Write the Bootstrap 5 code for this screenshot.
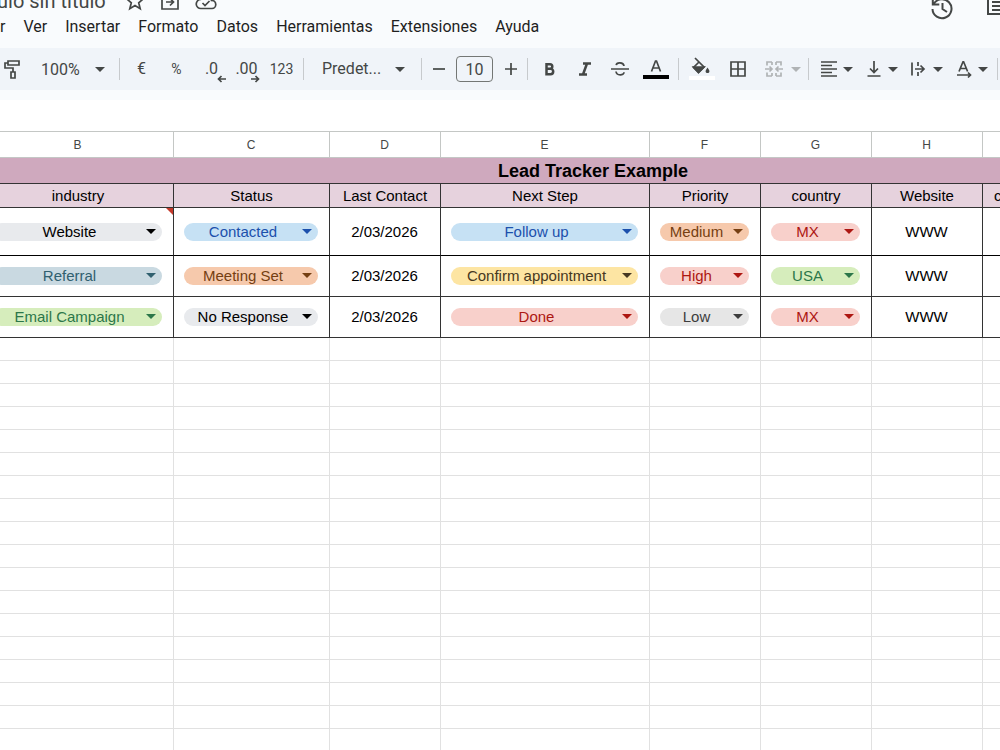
<!DOCTYPE html>
<html lang="es">
<head>
<meta charset="utf-8">
<meta name="viewport" content="width=device-width, initial-scale=1">
<title>Lead Tracker Example</title>
<link href="https://cdn.jsdelivr.net/npm/bootstrap@5.3.0/dist/css/bootstrap.min.css" rel="stylesheet">
<style>
body { font-family: Roboto, sans-serif; color: #1f1f1f; }
button, select { border: 0; background: none; padding: 0; color: inherit; white-space: nowrap; }
svg { display: block; fill: none; stroke: currentColor; stroke-width: 2; overflow: visible; }
svg.thin { stroke-width: 1.7; }
svg.bold { stroke-width: 2.5; }
.app-head { background: #f9fbfd; padding-bottom: 10px; }
.ink { color: #444746; }
/* title bar scrolled partly out of view */
.doc-bar { height: 13px; }
.doc-title { font-size: 20px; line-height: 24px; margin-left: -3px; }
.doc-tools { margin-left: 19px; gap: 15px; }
.doc-actions { height: 20px; gap: 32px; margin-right: -10px; }
.menu-bar { gap: 18px; font-size: 16px; line-height: 28px; height: 35px; }
.tool-bar { background: #f0f4f9; height: 42px; font-size: 16px; }
.tool { width: 35px; height: 30px; display: flex; align-items: center; justify-content: center; flex: none; }
.tool-wide { width: 37px; }
.tool-step { width: 25px; }
.tool-sm { font-size: 14px; }
.tool-edge { margin-left: -6px; width: 36px; }
.tool-drop { width: 45px; gap: 5px; justify-content: flex-start; padding-left: 7px; }
.tool-merge { width: 49px; gap: 8px; padding-left: 10px; color: #b0b3b5; }
.decimals { position: relative; line-height: 30px; }
.decimals svg { position: absolute; right: -2px; bottom: 1px; }
.rule { width: 1px; height: 22px; margin: 0 4px; background: #c7cacd; flex: none; }
.caret { border: 5px solid transparent; border-top-color: currentColor; border-bottom: 0; flex: none; margin-top: 1px; }
.pick { position: relative; flex: none; }
.pick select { appearance: none; width: 100%; }
.pick::after { content: ""; position: absolute; right: 10px; top: 50%; margin-top: -2px; border: 5px solid transparent; border-top-color: currentColor; border-bottom: 0; pointer-events: none; }
.pick-zoom { width: 85px; }
.pick-font { width: 109px; }
.pick-font::after { right: 12px; }
.pick-zoom select { padding-left: 11px; padding-top: 2px; }
.pick-font select { padding-left: 14px; }
.size-box { width: 37px; height: 26px; margin: 0 5px; padding: 0; border: 1px solid #747775; border-radius: 4px; background: none; text-align: center; color: inherit; }
.sheet-view { margin-left: -17px; padding-top: 31px; }
.sheet { table-layout: fixed; border-collapse: separate; border-spacing: 0; width: calc(100% + 205px); font: 15px/18px "Liberation Sans", Arial, sans-serif; color: #000; border-top: 1px solid #c4c7c5; }
.sheet th, .sheet td { padding: 0 11px 0 10px; text-align: center; vertical-align: middle; font-weight: 400; height: 23px; border-right: 1px solid #e1e1e1; border-bottom: 1px solid #e1e1e1; }
.sheet .letters th { height: 26px; font-size: 12px; color: #444746; border-color: #c4c7c5; }
.sheet .band th { height: 26px; font-size: 18px; font-weight: 700; background: #cfa9be; border-color: #333; }
.sheet .heads th { height: 24px; padding: 0; background: #e6d2dd; border-color: #333; }
.sheet .heads th:last-child { text-align: left; padding-left: 11px; }
.sheet .lead-row td { height: 41px; border-color: #333; }
.sheet .lead-row.first td { height: 48px; border-color: #000 #333; }
.has-note { position: relative; }
.has-note::before { content: ""; position: absolute; top: 0; right: 0; border-left: 7px solid transparent; border-top: 7px solid #c5392b; }
.chip { display: block; border-radius: 9px; background: var(--fill); color: var(--text); }
.chip select { display: block; height: 18px; line-height: 18px; font-size: 15px; text-align: center; text-align-last: center; padding-right: 16px; }
.chip::after { right: 6px; margin-top: -3px; }
.c-grey { --fill: #e8eaed; --text: #000; }
.c-mute { --fill: #e6e6e6; --text: #3d3d3d; }
.c-blue { --fill: #c6e1f4; --text: #1c50ac; }
.c-teal { --fill: #c9d9e1; --text: #30606f; }
.c-orange { --fill: #f6c9ac; --text: #753f12; }
.c-green { --fill: #d6edbc; --text: #2c7749; }
.c-yellow { --fill: #fde5a3; --text: #473821; }
.c-red { --fill: #f8d0cb; --text: #ad1712; }
</style>
</head>
<body class="vh-100 overflow-hidden bg-white">
<header class="app-head">
  <div class="doc-bar ink d-flex align-items-end">
    <div class="doc-title">ulo sin título</div>
    <div class="doc-tools d-flex align-items-end">
      <button aria-label="Destacar"><svg class="thin" width="20" height="22" viewBox="0 0 20 22"><path d="M10 1.500l2.300 5.800 6 .5-4.600 4 1.500 6-5.200-3.200-5.200 3.200 1.500-6-4.600-4 6-.5z"/></svg></button>
      <button aria-label="Mover"><svg class="thin" width="20" height="22" viewBox="0 0 20 22"><path d="M2 3h6l2 2h8v13H2zM6 11h7M10 7.500l3.500 3.500-3.500 3.500"/></svg></button>
      <button aria-label="Estado del documento"><svg class="thin" width="22" height="22" viewBox="0 0 22 22"><path d="M6 17.500a4.500 4.500 0 0 1-.5-9A6 6 0 0 1 16.500 9.500a4 4 0 0 1 .5 8zM7.500 12l2.500 2.500 4.500-4.500"/></svg></button>
    </div>
    <div class="doc-actions ms-auto d-flex align-items-end align-self-start">
      <button aria-label="Historial"><svg width="24" height="24" viewBox="0 0 24 24"><path d="M3.500 8.500A9.500 9.500 0 1 1 2.500 13M2.800 2v6.500h6.500M12.500 7v6l4.500 3"/></svg></button>
      <button aria-label="Comentarios"><svg width="24" height="24" viewBox="0 0 24 24"><path d="M23 0H2v18h22M6 6h18M6 10h18M6 14h18"/></svg></button>
    </div>
  </div>
  <nav class="menu-bar d-flex align-items-start" aria-label="Menú">
    <button>r</button><button>Ver</button><button>Insertar</button><button>Formato</button><button>Datos</button><button>Herramientas</button><button>Extensiones</button><button>Ayuda</button>
  </nav>
  <div class="tool-bar ink d-flex align-items-center overflow-hidden" role="toolbar" aria-label="Formato">
    <button class="tool tool-edge" aria-label="Copiar formato"><svg class="thin" width="18" height="20" viewBox="0 0 18 20"><path d="M5 2h11v4H5zM5 4H2v5h8v4M8 13h4v6H8z"/></svg></button>
    <span class="pick pick-zoom"><select aria-label="Zoom"><option>100%</option></select></span>
    <span class="rule"></span>
    <button class="tool" aria-label="Moneda">€</button>
    <button class="tool tool-sm" aria-label="Porcentaje">%</button>
    <button class="tool" aria-label="Reducir decimales"><span class="decimals">.0<svg class="thin" style="right:-8px" width="9" height="8" viewBox="0 0 9 8"><path d="M9 4H1.500M4.500 1l-3 3 3 3"/></svg></span></button>
    <button class="tool" aria-label="Aumentar decimales"><span class="decimals">.00<svg class="thin" width="9" height="8" viewBox="0 0 9 8"><path d="M0 4h7.500M4.500 1l3 3-3 3"/></svg></span></button>
    <button class="tool tool-sm" aria-label="Más formatos">123</button>
    <span class="rule"></span>
    <span class="pick pick-font"><select aria-label="Fuente"><option>Predet...</option></select></span>
    <span class="rule"></span>
    <button class="tool tool-step" aria-label="Reducir"><svg class="thin" width="12" height="12" viewBox="0 0 12 12"><path d="M0 6h12"/></svg></button>
    <input class="size-box" aria-label="Tamaño de fuente" value="10">
    <button class="tool tool-step" aria-label="Aumentar"><svg class="thin" width="12" height="12" viewBox="0 0 12 12"><path d="M0 6h12M6 0v12"/></svg></button>
    <span class="rule"></span>
    <button class="tool" aria-label="Negrita"><svg class="bold" width="12" height="14" viewBox="0 0 12 14"><path d="M2.500 2.200h3.500a2.300 2.300 0 0 1 0 4.600H2.500zM2.500 6.800h4a2.700 2.700 0 0 1 0 5.400h-4z"/></svg></button>
    <button class="tool" aria-label="Cursiva"><svg class="bold" width="12" height="14" viewBox="0 0 12 14"><path d="M4 1.500h8M0 12.500h8M8 1.500L4 12.500"/></svg></button>
    <button class="tool" aria-label="Tachado"><svg class="thin" width="18" height="14" viewBox="0 0 18 14"><path d="M0 7h18M13 4C12.500 0 5.500 0 5.200 3.200M5 9.500c.5 4.500 8 4.300 8 .8"/></svg></button>
    <button class="tool tool-wide" aria-label="Color de texto"><svg class="thin" width="26" height="20" viewBox="0 0 26 20"><path d="M8.500 12.500L12.500 2h1l4 10.500M10 9h6"/><path d="M0 16h26v4H0z" fill="#000" stroke="none"/></svg></button>
    <span class="rule"></span>
    <button class="tool tool-wide" aria-label="Color de relleno"><svg class="thin" width="26" height="24" viewBox="0 0 26 24"><path d="M6 1l9 9-5.500 5.500L4.500 10.500 10 5"/><path d="M4.500 10h10.500l-5.500 5.500z" fill="currentColor"/><path d="M18.500 10.500c-3 4-2 5.500 0 5.500s3-1.500 0-5.500z" fill="currentColor" stroke="none"/><path d="M0 19h26v4H0z" fill="#fff" stroke="none"/></svg></button>
    <button class="tool" aria-label="Bordes"><svg class="thin" width="16" height="16" viewBox="0 0 16 16"><path d="M1 1h14v14H1zM8 1v14M1 8h14"/></svg></button>
    <button class="tool tool-drop tool-merge" aria-label="Combinar celdas"><svg class="thin" width="18" height="16" viewBox="0 0 18 16"><path d="M7 1H2v3.500M2 11.500v3.500h5M7 1v3M7 12v3M11 1h5v3.500M16 11.500v3.500h-5M11 1v3M11 12v3M0 8h7M4.500 5.500L7 8l-2.500 2.500M18 8h-7M13.500 5.500L11 8l2.500 2.500"/></svg><span class="caret"></span></button>
    <span class="rule"></span>
    <button class="tool tool-drop" aria-label="Alineación horizontal"><svg class="thin" width="18" height="16" viewBox="0 0 18 16"><path d="M1 1h16M1 4.500h11M1 8h16M1 11.500h11M1 15h16"/></svg><span class="caret"></span></button>
    <button class="tool tool-drop" aria-label="Alineación vertical"><svg class="thin" width="18" height="16" viewBox="0 0 18 16"><path d="M2.500 15h13M9 0v11M5 7.500l4 4 4-4"/></svg><span class="caret"></span></button>
    <button class="tool tool-drop" aria-label="Ajuste de texto"><svg class="thin" width="18" height="16" viewBox="0 0 18 16"><path d="M2 1.500v13M8 1v4M8 11v4M5 8h8.500M10.500 4.500L14 8l-3.500 3.500"/></svg><span class="caret"></span></button>
    <button class="tool tool-drop" aria-label="Rotación de texto"><svg class="thin" width="18" height="16" viewBox="0 0 18 16"><path d="M4 10.500L8 .8h.6l4 9.700M5.500 7.500h6M2 14h13M13 11.500l2.500 2.500-2.500 2.500"/></svg><span class="caret"></span></button>
    <span class="rule"></span>
  </div>
</header>
<main class="overflow-hidden">
  <div class="sheet-view">
    <table class="sheet">
      <colgroup><col width="191"><col width="156"><col width="111"><col width="209"><col width="111"><col width="111"><col width="111"><col></colgroup>
      <thead>
        <tr class="letters"><th>B</th><th>C</th><th>D</th><th>E</th><th>F</th><th>G</th><th>H</th><th></th></tr>
      </thead>
      <tbody id="cells">
        <tr class="band"><th colspan="8">Lead Tracker Example</th></tr>
        <tr class="heads"><th>industry</th><th>Status</th><th>Last Contact</th><th>Next Step</th><th>Priority</th><th>country</th><th>Website</th><th>c</th></tr>
        <tr class="lead-row first">
          <td class="has-note"><span class="pick chip c-grey"><select aria-label="industry"><option>Website</option></select></span></td>
          <td><span class="pick chip c-blue"><select aria-label="Status"><option>Contacted</option></select></span></td>
          <td>2/03/2026</td>
          <td><span class="pick chip c-blue"><select aria-label="Next Step"><option>Follow up</option></select></span></td>
          <td><span class="pick chip c-orange"><select aria-label="Priority"><option>Medium</option></select></span></td>
          <td><span class="pick chip c-red"><select aria-label="country"><option>MX</option></select></span></td>
          <td>WWW</td><td></td>
        </tr>
        <tr class="lead-row">
          <td><span class="pick chip c-teal"><select aria-label="industry"><option>Referral</option></select></span></td>
          <td><span class="pick chip c-orange"><select aria-label="Status"><option>Meeting Set</option></select></span></td>
          <td>2/03/2026</td>
          <td><span class="pick chip c-yellow"><select aria-label="Next Step"><option>Confirm appointment</option></select></span></td>
          <td><span class="pick chip c-red"><select aria-label="Priority"><option>High</option></select></span></td>
          <td><span class="pick chip c-green"><select aria-label="country"><option>USA</option></select></span></td>
          <td>WWW</td><td></td>
        </tr>
        <tr class="lead-row">
          <td><span class="pick chip c-green"><select aria-label="industry"><option>Email Campaign</option></select></span></td>
          <td><span class="pick chip c-grey"><select aria-label="Status"><option>No Response</option></select></span></td>
          <td>2/03/2026</td>
          <td><span class="pick chip c-red"><select aria-label="Next Step"><option>Done</option></select></span></td>
          <td><span class="pick chip c-mute"><select aria-label="Priority"><option>Low</option></select></span></td>
          <td><span class="pick chip c-red"><select aria-label="country"><option>MX</option></select></span></td>
          <td>WWW</td><td></td>
        </tr>
      </tbody>
    </table>
  </div>
</main>
<script src="https://cdn.jsdelivr.net/npm/bootstrap@5.3.0/dist/js/bootstrap.bundle.min.js"></script>
<script>
// Empty rows below the data
const body = document.getElementById("cells");
for (let i = 0; i < 18; i++) {
  const row = body.insertRow();
  for (let c = 0; c < 8; c++) row.insertCell();
}
</script>
</body>
</html>
